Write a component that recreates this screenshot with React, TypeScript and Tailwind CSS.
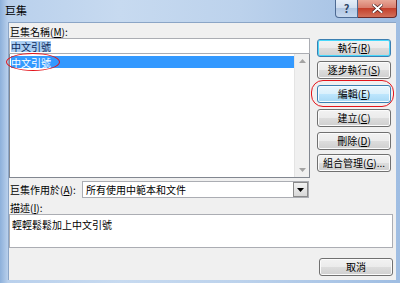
import React from 'react';

const font = "font-['Noto_Sans_CJK_TC','Noto_Sans',sans-serif]";

const btnBase =
  'flex h-[18px] w-[74px] items-center justify-center rounded-[3px] border text-[10px] leading-none text-black';
const btnNormal =
  'border-[#707070] bg-[linear-gradient(#f2f2f2_0%,#ebebeb_50%,#dddddd_50%,#cfcfcf_100%)] shadow-[inset_0_0_0_1px_#fbfbfb]';
const btnDefault =
  'border-[#3c7fb1] bg-[linear-gradient(#f2f2f2_0%,#ebebeb_50%,#dddddd_50%,#cfcfcf_100%)] shadow-[inset_0_0_0_1px_#48d8fb]';
const btnHot =
  'border-[#3c7fb1] bg-[linear-gradient(#eaf6fd_0%,#d9f0fc_50%,#bee6fd_50%,#a7d9f5_100%)] shadow-[inset_0_0_0_1px_#f5fbfe]';

const Mn = ({ k }: { k: string }) => (
  <>
    (<u className="underline-offset-1">{k}</u>)
  </>
);

const Button = ({
  text,
  k,
  tail = '',
  kind = 'normal',
  className = '',
}: {
  text: string;
  k: string;
  tail?: string;
  kind?: 'normal' | 'default' | 'hot';
  className?: string;
}) => (
  <div
    className={`${btnBase} ${
      kind === 'default' ? btnDefault : kind === 'hot' ? btnHot : btnNormal
    } ${className}`}
  >
    <span>
      {text}
      <Mn k={k} />
      {tail}
    </span>
  </div>
);

const App = () => {
  return (
    <div
      className={`relative flex h-[283px] w-[400px] flex-col overflow-hidden bg-[linear-gradient(90deg,#8db0da_0%,#b9d0ec_2%,#c7daf0_30%,#bcd2ec_60%,#9fbde2_100%)] ${font}`}
    >
      {/* title bar */}
      <div className="flex h-[22px] shrink-0 items-start">
        <span className="pl-[5px] pt-[4px] text-[11px] leading-[13px] text-black">巨集</span>
        <div className="ml-auto mr-[3px] flex h-[18px]">
          <div className="flex h-[18px] w-[23px] items-center justify-center rounded-bl-[4px] border border-t-0 border-[#4d6a93] bg-[linear-gradient(#e4edf8_0%,#cfdcee_50%,#b2c7e3_50%,#c5d7ee_100%)] text-[11px] font-bold leading-none text-[#2d4466]">
            ?
          </div>
          <div className="flex h-[18px] w-[39px] items-center justify-center rounded-br-[4px] border border-l-0 border-t-0 border-[#6b2a2a] bg-[linear-gradient(#e8a898_0%,#d77a6a_50%,#c4402c_50%,#d2705a_100%)]">
            <svg width="11" height="9" viewBox="0 0 11 9">
              <path
                d="M1.5 1 L9.5 8 M9.5 1 L1.5 8"
                stroke="#3a1010"
                strokeWidth="3.2"
                strokeLinecap="square"
              />
              <path
                d="M1.5 1 L9.5 8 M9.5 1 L1.5 8"
                stroke="#ffffff"
                strokeWidth="2"
                strokeLinecap="square"
              />
            </svg>
          </div>
        </div>
      </div>

      {/* frame + client */}
      <div className="flex flex-1 pb-[3px] pl-[8px] pr-[4px]">
        <div className="flex flex-1 flex-col border-l border-t border-[#8ba5c6] bg-[#f0f0f0] pr-[3px] text-[10px] leading-[13px] text-black">
          {/* top section */}
          <div className="flex">
            <div className="ml-[0px] flex w-[301px] flex-col">
              <div className="h-[15px] pl-[1px] pt-[2px]">
                巨集名稱<Mn k="M" />:
              </div>
              <div className="flex h-[16px] items-center border border-[#abadb3] bg-white pl-[1px]">
                <span className="bg-[#a9cdf3] text-[#0b2a5c] leading-[11px]">中文引號</span>
              </div>
              <div className="flex h-[124px] border border-t-0 border-[#828790] bg-white">
                <div className="flex-1 pl-[1px] pt-[2px]">
                  <div className="flex h-[12px] items-center bg-[#3399ff] text-white">中文引號</div>
                </div>
                <div className="flex w-[15px] flex-col items-center justify-between border-l border-[#e4e4e4] bg-[#f0f0f0] py-[5px]">
                  <svg width="7" height="4" viewBox="0 0 7 4">
                    <path d="M0 4 L3.5 0 L7 4 Z" fill="#a3a3a3" />
                  </svg>
                  <svg width="7" height="4" viewBox="0 0 7 4">
                    <path d="M0 0 L3.5 4 L7 0 Z" fill="#a3a3a3" />
                  </svg>
                </div>
              </div>
            </div>
            <div className="ml-[7px] mt-[16px] flex flex-col">
              <Button text="執行" k="R" kind="default" />
              <Button text="逐步執行" k="S" className="mt-[4px]" />
              <Button text="編輯" k="E" kind="hot" className="mt-[6px]" />
              <Button text="建立" k="C" className="mt-[6px]" />
              <Button text="刪除" k="D" className="mt-[5px]" />
              <Button text="組合管理" k="G" tail="..." className="mt-[4px]" />
            </div>
          </div>

          {/* applies to */}
          <div className="mt-[3px] flex h-[17px] items-center">
            <span className="w-[73px] pl-[1px]">
              巨集作用於<Mn k="A" />:
            </span>
            <div className="flex h-[17px] w-[227px] items-center border border-[#abadb3] bg-white">
              <span className="flex-1 pl-[3px]">所有使用中範本和文件</span>
              <div className="flex h-[15px] w-[15px] items-center justify-center border border-[#8a8a8a] bg-[linear-gradient(#f2f2f2,#d8d8d8)]">
                <svg width="7" height="4" viewBox="0 0 7 4">
                  <path d="M0 0 L3.5 4 L7 0 Z" fill="#000" />
                </svg>
              </div>
            </div>
          </div>

          {/* description */}
          <div className="mt-[2px] h-[14px] pl-[1px] pt-[1px]">
            描述<Mn k="I" />:
          </div>
          <div className="h-[34px] border border-[#abadb3] bg-white pl-[2px] pt-[3px]">輕輕鬆鬆加上中文引號</div>

          <div className="mt-[10px] flex justify-end">
            <div className={`${btnBase} ${btnNormal} w-[62px]`}>取消</div>
          </div>
        </div>
      </div>

      {/* annotations */}
      <div className="pointer-events-none absolute left-[6px] top-[53px] h-[18px] w-[54px] rounded-[50%] border-[1.5px] border-[#e3141b]" />
      <div className="pointer-events-none absolute left-[311px] top-[80px] h-[27px] w-[83px] rounded-[12px] border-[1.5px] border-[#e3141b]" />
    </div>
  );
};

export default App;
